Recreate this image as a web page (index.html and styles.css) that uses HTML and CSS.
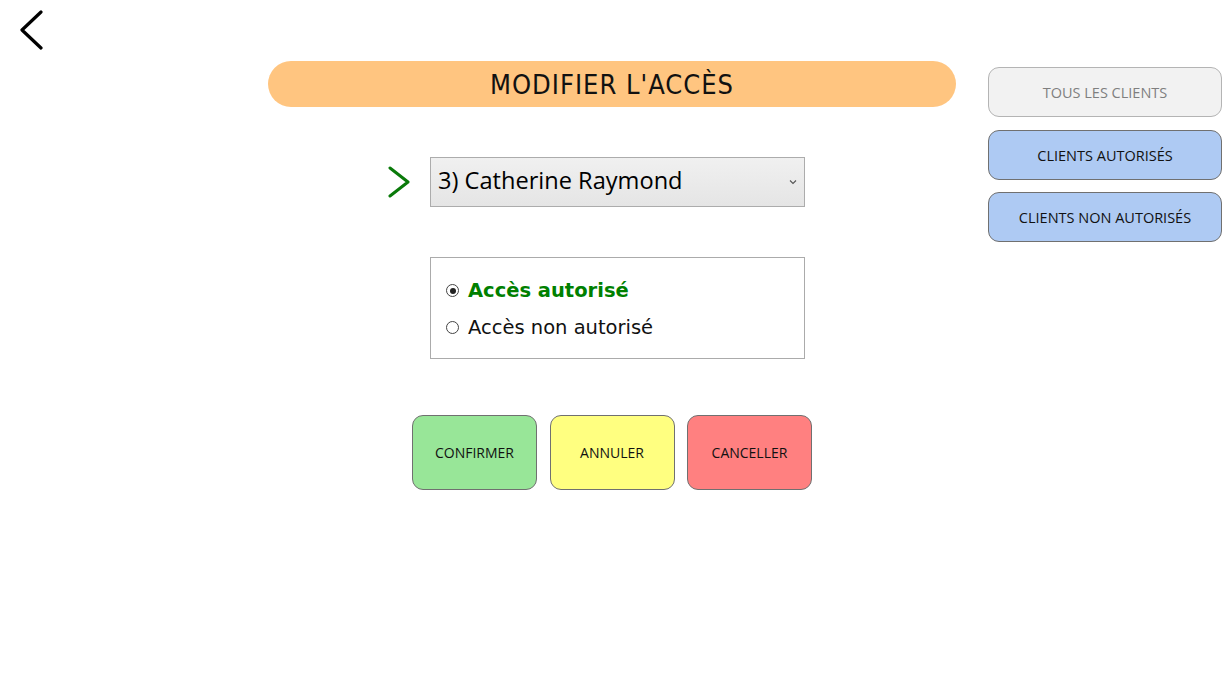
FILE: index.html
```html
<!DOCTYPE html>
<html lang="fr">
<head>
<meta charset="utf-8">
<title>Modifier l'accès</title>
<link rel="stylesheet" href="styles.css">
</head>
<body>
<div class="page">
  <div class="back-col">
    <button class="back" aria-label="Retour">
      <svg width="30" height="40" viewBox="0 0 30 40"><path d="M25 2 L6 20 L25 38" fill="none" stroke="#000" stroke-width="3.2" stroke-linecap="round" stroke-linejoin="round"/></svg>
    </button>
  </div>
  <main class="main">
    <div class="title">MODIFIER L'ACCÈS</div>
    <div class="select-row">
      <svg class="pointer" width="24" height="32" viewBox="0 0 24 32"><path d="M2 2 L20 16 L2 30" fill="none" stroke="#0a7a0a" stroke-width="3" stroke-linecap="round" stroke-linejoin="round"/></svg>
      <div class="select">
        <span class="select-text">3) Catherine Raymond</span>
        <svg class="caret" width="8" height="6" viewBox="0 0 8 6"><path d="M1 1.5 L4 4.5 L7 1.5" fill="none" stroke="#555" stroke-width="1.1"/></svg>
      </div>
    </div>
    <div class="radio-box">
      <div class="radio-row selected"><span class="radio on"></span><span>Accès autorisé</span></div>
      <div class="radio-row"><span class="radio"></span><span>Accès non autorisé</span></div>
    </div>
    <div class="actions">
      <button class="act green">CONFIRMER</button>
      <button class="act yellow">ANNULER</button>
      <button class="act red">CANCELLER</button>
    </div>
  </main>
  <aside class="side">
    <button class="sbtn grey">TOUS LES CLIENTS</button>
    <button class="sbtn blue">CLIENTS AUTORISÉS</button>
    <button class="sbtn blue">CLIENTS NON AUTORISÉS</button>
  </aside>
</div>
</body>
</html>
```

FILE: styles.css
```css
html, body {
  margin: 0;
  padding: 0;
  background: #ffffff;
}
body {
  font-family: "Open Sans", "Noto Sans", sans-serif;
  color: #000;
}
.page {
  display: grid;
  grid-template-columns: 268px 688px 267px;
  width: 1223px;
  height: 692px;
}
.back-col {
  padding: 10px 0 0 16px;
}
.back {
  background: none;
  border: 0;
  padding: 0;
  margin: 0;
  display: block;
  cursor: pointer;
}
.back svg { display: block; }
.main {
  display: flex;
  flex-direction: column;
  padding-top: 61px;
}
.title {
  height: 46px;
  border-radius: 23px;
  background: #ffc580;
  display: flex;
  align-items: center;
  justify-content: center;
  font-family: "DejaVu Sans", sans-serif;
  font-stretch: condensed;
  font-size: 27px;
  font-weight: 400;
  letter-spacing: 1px;
  color: #111;
}
.select-row {
  display: flex;
  align-items: center;
  margin-top: 50px;
  padding-left: 120px;
  gap: 18px;
}
.pointer { display: block; }
.select {
  width: 375px;
  height: 50px;
  box-sizing: border-box;
  border: 1px solid #acacac;
  background: linear-gradient(#f0f0f0, #e5e5e5);
  display: flex;
  align-items: center;
  justify-content: space-between;
  padding: 0 7px 4px 7px;
}
.select-text {
  font-size: 23.6px;
  font-family: "Open Sans", sans-serif;
  color: #000;
}
.caret { display: block; margin-top: 4px; }
.radio-box {
  margin: 50px 0 0 162px;
  width: 375px;
  height: 102px;
  box-sizing: border-box;
  border: 1px solid #ababab;
  padding: 18px 0 0 15px;
  display: flex;
  flex-direction: column;
  gap: 8px;
  font-family: "DejaVu Sans", sans-serif;
}
.radio-row {
  display: flex;
  align-items: center;
  gap: 9px;
  font-size: 19.5px;
  height: 29px;
  color: #111;
}
.radio-row.selected {
  color: #008000;
  font-weight: 700;
}
.radio {
  width: 13px;
  height: 13px;
  box-sizing: border-box;
  border: 1px solid #444;
  border-radius: 50%;
  display: flex;
  align-items: center;
  justify-content: center;
  flex: none;
}
.radio.on::after {
  content: "";
  width: 6px;
  height: 6px;
  border-radius: 50%;
  background: #222;
}
.actions {
  display: flex;
  gap: 12.5px;
  margin: 56px 0 0 144px;
}
.act, .sbtn {
  font-family: "Open Sans", "Noto Sans", sans-serif;
  font-size: 14.5px;
  color: #111;
  border: 1px solid #707070;
  border-radius: 11px;
  margin: 0;
  padding: 0;
  cursor: pointer;
}
.act {
  width: 125px;
  height: 75px;
  font-size: 14px;
}
.green { background: #98e698; }
.yellow { background: #ffff80; }
.red { background: #ff8080; }
.side {
  display: flex;
  flex-direction: column;
  padding: 67px 0 0 32px;
  gap: 13px;
}
.sbtn {
  width: 234px;
  height: 50px;
}
.sbtn.grey {
  background: #f2f2f2;
  border-color: #b4b4b4;
  color: #7f7f7f;
}
.sbtn.blue {
  background: #aecaf3;
}
.side .sbtn:last-child { margin-top: -1px; }
```
